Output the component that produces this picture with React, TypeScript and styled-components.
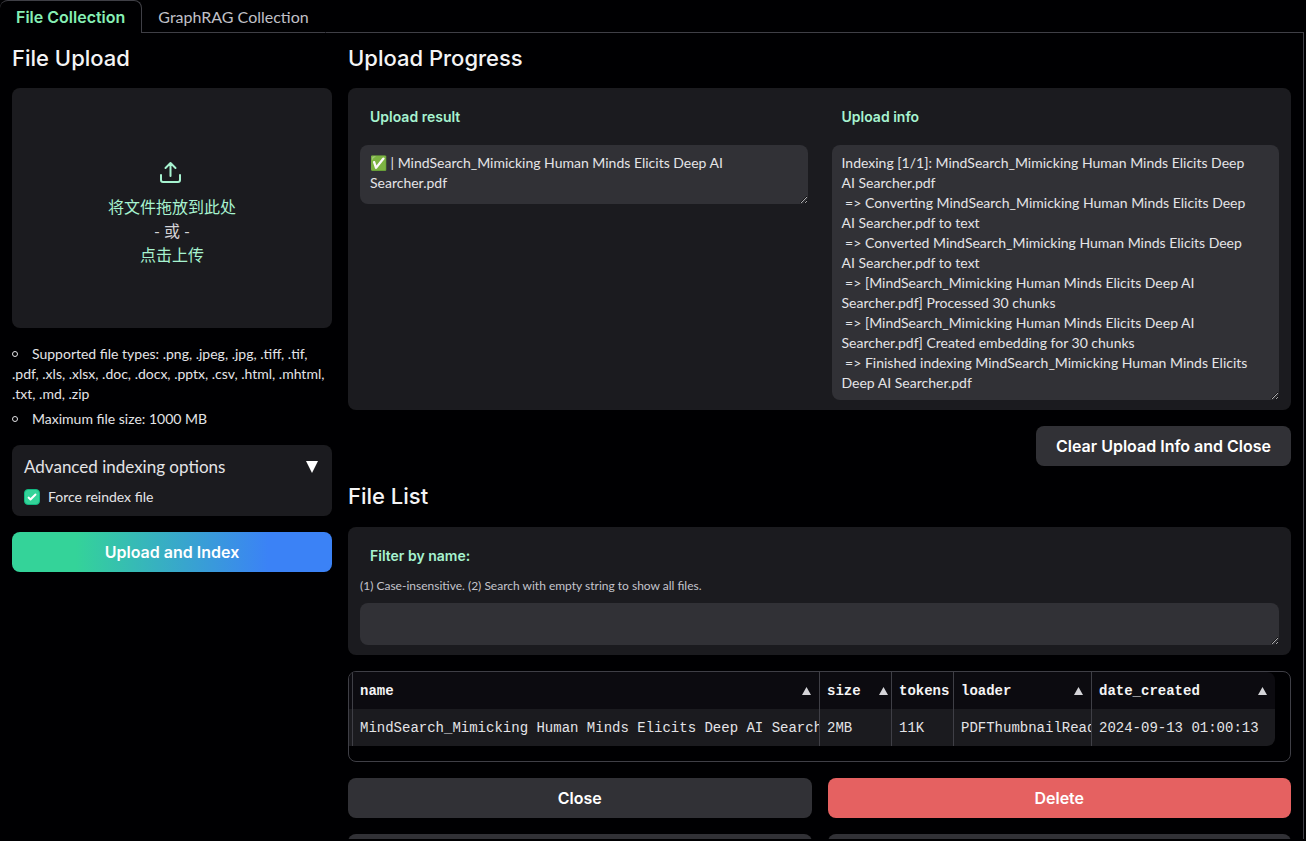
import React from "react";
import styled, { createGlobalStyle } from "styled-components";

const sans = `Lato, "Noto Sans CJK SC", sans-serif`;
const display = `Inter, "Noto Sans CJK SC", sans-serif`;
const mono = `"Liberation Mono", monospace`;

const GlobalStyle = createGlobalStyle`
  *, *::before, *::after { box-sizing: border-box; }
  body { margin: 0; background: #000002; color: #e4e4e7; font-family: ${sans}; font-size: 16px; line-height: 24px; }
  button, textarea, input { font-family: inherit; }
`;

const Page = styled.div`
  height: calc(100vh - 2px);
  margin-right: 2px;
  overflow: auto;
  scrollbar-width: none;
`;

const Tabs = styled.div`
  display: flex;
  height: 33px;
`;

const Tab = styled.button<{ $active?: boolean }>`
  padding: 0 16px;
  border: 1px solid ${(p) => (p.$active ? "#3f3f46" : "transparent")};
  border-left-width: 0;
  border-bottom: ${(p) => (p.$active ? "0" : "1px solid #3f3f46")};
  border-radius: ${(p) => (p.$active ? "8px 8px 0 0" : "0")};
  background: transparent;
  color: ${(p) => (p.$active ? "#86efb5" : "#c0c0c8")};
  font-family: ${(p) => (p.$active ? display : sans)};
  font-size: 16px;
  font-weight: ${(p) => (p.$active ? 600 : 400)};
`;

const TabRule = styled.div`
  flex: 1;
  border-bottom: 1px solid #3f3f46;
`;

const Panel = styled.main`
  display: grid;
  grid-template-columns: 320px minmax(0, 1fr);
  gap: 16px;
  padding: 11px 12px 16px;
  border-right: 1px solid #3f3f46;
`;

const Column = styled.section`
  display: flex;
  flex-direction: column;
  gap: 16px;
`;

const Heading = styled.h2<{ $spaced?: boolean }>`
  margin: 0;
  padding-bottom: ${(p) => (p.$spaced ? "1px" : "0")};
  line-height: 28px;
  font-family: ${display};
  font-size: 22px;
  font-weight: 500;
  color: #f4f4f5;
`;

const Card = styled.div`
  padding: 10px 12px;
  border-radius: 8px;
  background: #1b1b1f;
`;

const DropZone = styled.button`
  display: flex;
  flex-direction: column;
  align-items: center;
  justify-content: center;
  height: 240px;
  padding: 12px 0 0;
  border: 0;
  border-radius: 8px;
  background: #1b1b1f;
  color: #a7f3d0;
  font-size: 16px;
  line-height: 24px;
  svg { margin-bottom: 10px; }
`;

const Or = styled.span`
  color: #d4d4d8;
`;

const Notes = styled.ul`
  display: flex;
  flex-direction: column;
  gap: 5px;
  margin: 0;
  padding: 0;
  list-style: none;
  font-size: 14px;
  line-height: 20px;
`;

const Note = styled.li`
  white-space: pre-line;
  &::before {
    content: "";
    display: inline-block;
    width: 6px;
    height: 6px;
    margin: 0 14px 2px 0;
    border: 1px solid #e4e4e7;
    border-radius: 50%;
  }
`;

const Accordion = styled(Card)`
  display: flex;
  flex-direction: column;
  gap: 8px;
`;

const AccordionToggle = styled.button`
  display: flex;
  align-items: center;
  justify-content: space-between;
  padding: 0 2px 0 0;
  border: 0;
  background: transparent;
  color: #e4e4e7;
  font-size: 17px;
  line-height: 24px;
`;

const CheckLabel = styled.label`
  display: flex;
  align-items: center;
  gap: 8px;
  font-size: 14px;
  line-height: 19px;
`;

const CheckBox = styled.span`
  display: grid;
  width: 16px;
  height: 16px;
  input, svg { grid-area: 1 / 1; margin: 0; width: 16px; height: 16px; pointer-events: none; }
  input { appearance: none; border: 1px solid #10b981; border-radius: 4px; background: #34d399; }
`;

const Button = styled.button<{ $kind?: "primary" | "stop" }>`
  height: 40px;
  padding: 0 20px;
  border: 0;
  border-radius: 8px;
  background: ${(p) =>
    p.$kind === "primary"
      ? "linear-gradient(to right, #34d399 20%, #3b82f6 80%)"
      : p.$kind === "stop"
        ? "#e56161"
        : "#313136"};
  color: #ffffff;
  font-family: ${display};
  font-size: 16px;
  font-weight: 600;
`;

const ButtonEnd = styled.div`
  display: flex;
  justify-content: flex-end;
`;

const ButtonPair = styled.div`
  display: grid;
  grid-template-columns: 1fr 1fr;
  gap: 16px;
`;

const ResultGrid = styled(Card)`
  display: grid;
  grid-template-columns: 1fr 1fr;
  align-items: start;
  gap: 24px;
`;

const Field = styled.div`
  display: flex;
  flex-direction: column;
  min-width: 0;
`;

const FieldLabel = styled.label`
  margin-bottom: 9px;
  padding: 9px 10px;
  color: #a7f3d0;
  font-family: ${display};
  font-size: 14px;
  font-weight: 600;
  line-height: 20px;
`;

const Hint = styled.span`
  margin: -7px 0 8px;
  color: #c4c4cc;
  font-size: 12px;
  line-height: 18px;
`;

const TextArea = styled.textarea<{ $height: number }>`
  display: block;
  width: 100%;
  height: ${(p) => p.$height}px;
  padding: 8px 24px 8px 10px;
  border: 0;
  border-radius: 8px;
  outline: 0;
  overflow: hidden;
  resize: vertical;
  background: #313136;
  color: #e4e4e7;
  font-size: 14px;
  line-height: 20px;
`;

const TableFrame = styled.div`
  padding: 0 15px 15px 0;
  border: 1px solid #3f3f46;
  border-radius: 8px;
  overflow: hidden;
`;

const Table = styled.table`
  width: 100%;
  table-layout: fixed;
  border-spacing: 0;
  border-radius: 0 8px 8px 0;
  overflow: hidden;
  font-family: ${mono};
  font-size: 14px;
  line-height: 20px;
  text-align: left;
  th, td {
    height: 37px;
    padding: 0 8px 0 7px;
    border-left: 1px solid #3f3f46;
    overflow: hidden;
    white-space: nowrap;
  }
  td { padding-right: 0; }
  th:first-child, td:first-child { padding: 0; border: 0; }
  thead { background: #0c0b10; color: #f4f4f5; }
  tbody { background: #1b1b1f; color: #e4e4e7; }
`;

const Col = styled.col<{ $width?: number }>`
  width: ${(p) => (p.$width ? `${p.$width}px` : "auto")};
`;

const HeadCell = styled.span`
  display: flex;
  align-items: center;
  justify-content: space-between;
  gap: 18px;
`;

const SortButton = styled.button`
  display: flex;
  flex-shrink: 0;
  padding: 0;
  border: 0;
  background: transparent;
`;

const columns = [
  { name: "name", sortable: true },
  { name: "size", sortable: true },
  { name: "tokens", sortable: false },
  { name: "loader", sortable: true },
  { name: "date_created", sortable: true },
];

const rows = [
  ["MindSearch_Mimicking Human Minds Elicits Deep AI Searcher.pdf", "2MB", "11K", "PDFThumbnailReader", "2024-09-13 01:00:13"],
];

const result = "✅ | MindSearch_Mimicking Human Minds Elicits Deep AI Searcher.pdf";

const info = [
  "Indexing [1/1]: MindSearch_Mimicking Human Minds Elicits Deep AI Searcher.pdf",
  " => Converting MindSearch_Mimicking Human Minds Elicits Deep AI Searcher.pdf to text",
  " => Converted MindSearch_Mimicking Human Minds Elicits Deep AI Searcher.pdf to text",
  " => [MindSearch_Mimicking Human Minds Elicits Deep AI Searcher.pdf] Processed 30 chunks",
  " => [MindSearch_Mimicking Human Minds Elicits Deep AI Searcher.pdf] Created embedding for 30 chunks",
  " => Finished indexing MindSearch_Mimicking Human Minds Elicits Deep AI Searcher.pdf",
].join("\n");

export default function App() {
  return (
    <>
      <GlobalStyle />
      <Page>
        <Tabs role="tablist">
          <Tab role="tab" aria-selected="true" $active>File Collection</Tab>
          <Tab role="tab" aria-selected="false">GraphRAG Collection</Tab>
          <TabRule />
        </Tabs>
        <Panel>
          <Column>
            <Heading>File Upload</Heading>
            <DropZone>
              <svg width="24" height="24" viewBox="0 0 24 24" fill="none" stroke="currentColor" strokeWidth="2" strokeLinecap="round" strokeLinejoin="round">
                <path d="M1 14v5a2 2 0 0 0 2 2h15a2 2 0 0 0 2-2V14M5.500 7l5-5 5 5M10.500 2v13" />
              </svg>
              <span>将文件拖放到此处</span>
              <Or>- 或 -</Or>
              <span>点击上传</span>
            </DropZone>
            <Notes>
              <Note>
                {"Supported file types: .png, .jpeg, .jpg, .tiff, .tif,\n.pdf, .xls, .xlsx, .doc, .docx, .pptx, .csv, .html, .mhtml,\n.txt, .md, .zip"}
              </Note>
              <Note>Maximum file size: 1000 MB</Note>
            </Notes>
            <Accordion>
              <AccordionToggle aria-expanded="true">
                Advanced indexing options
                <svg width="12" height="12" viewBox="0 0 12 12" fill="#ffffff">
                  <path d="M0 0h12L6 12z" />
                </svg>
              </AccordionToggle>
              <CheckLabel>
                <CheckBox>
                  <input type="checkbox" defaultChecked />
                  <svg viewBox="0 0 16 16" fill="#ffffff">
                    <path d="M12.2 4.8a1 1 0 0 1 0 1.4l-5 5a1 1 0 0 1-1.4 0l-2-2a1 1 0 0 1 1.4-1.4L6.5 9.1l4.3-4.3a1 1 0 0 1 1.4 0z" />
                  </svg>
                </CheckBox>
                Force reindex file
              </CheckLabel>
            </Accordion>
            <Button $kind="primary">Upload and Index</Button>
          </Column>

          <Column>
            <Heading>Upload Progress</Heading>
            <ResultGrid>
              <Field>
                <FieldLabel htmlFor="result">Upload result</FieldLabel>
                <TextArea id="result" $height={59} readOnly defaultValue={result} />
              </Field>
              <Field>
                <FieldLabel htmlFor="info">Upload info</FieldLabel>
                <TextArea id="info" $height={255} readOnly defaultValue={info} />
              </Field>
            </ResultGrid>
            <ButtonEnd>
              <Button>Clear Upload Info and Close</Button>
            </ButtonEnd>
            <Heading $spaced>File List</Heading>
            <Card>
              <Field>
                <FieldLabel htmlFor="filter">Filter by name:</FieldLabel>
                <Hint>(1) Case-insensitive. (2) Search with empty string to show all files.</Hint>
                <TextArea id="filter" $height={42} />
              </Field>
            </Card>
            <TableFrame>
              <Table>
                <colgroup>
                  <Col $width={3} />
                  <Col />
                  <Col $width={72} />
                  <Col $width={62} />
                  <Col $width={138} />
                  <Col $width={184} />
                </colgroup>
                <thead>
                  <tr>
                    <td />
                    {columns.map((c) => (
                      <th key={c.name} scope="col">
                        <HeadCell>
                          {c.name}
                          {c.sortable && (
                            <SortButton aria-label={`Sort by ${c.name}`}>
                              <svg width="9" height="8" viewBox="0 0 9 8" fill="#d4d4d8">
                                <path d="M4.5 0L9 8H0z" />
                              </svg>
                            </SortButton>
                          )}
                        </HeadCell>
                      </th>
                    ))}
                  </tr>
                </thead>
                <tbody>
                  {rows.map((row) => (
                    <tr key={row[0]}>
                      <td />
                      {row.map((cell) => (
                        <td key={cell}>{cell}</td>
                      ))}
                    </tr>
                  ))}
                </tbody>
              </Table>
            </TableFrame>
            <ButtonPair>
              <Button>Close</Button>
              <Button $kind="stop">Delete</Button>
            </ButtonPair>
            <ButtonPair>
              <Button aria-label="Chat" />
              <Button aria-label="Download" />
            </ButtonPair>
          </Column>
        </Panel>
      </Page>
    </>
  );
}
